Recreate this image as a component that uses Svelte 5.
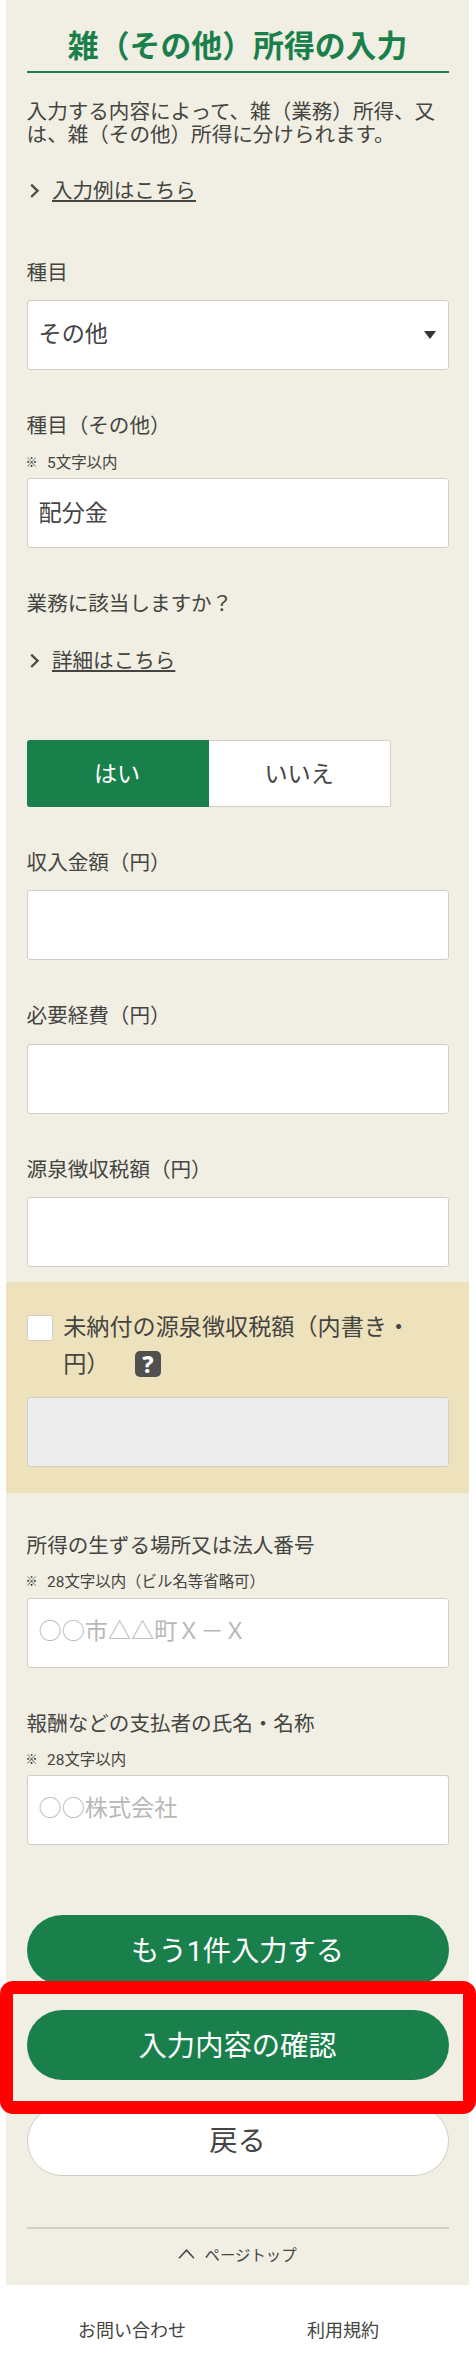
<script lang="ts">
  type AmountField = { id: string; label: string };

  const amounts: AmountField[] = [
    { id: 'income', label: '収入金額（円）' },
    { id: 'expense', label: '必要経費（円）' },
    { id: 'withholding', label: '源泉徴収税額（円）' }
  ];

  const payerFields = [
    { id: 'place', label: '所得の生ずる場所又は法人番号', hint: '28文字以内（ビル名等省略可）', placeholder: '○○市△△町Ｘ－Ｘ' },
    { id: 'payer', label: '報酬などの支払者の氏名・名称', hint: '28文字以内', placeholder: '○○株式会社' }
  ];

  let kind = $state('その他');
  let kindOther = $state('配分金');
  let isBusiness = $state(true);
  let unpaid = $state(false);
</script>

{#snippet chevron()}
  <svg class="chevron" width="10" height="16" viewBox="0 0 10 16">
    <path d="M1.2 1.6 L7.6 7.8 L1.2 14" fill="none" stroke="#4b4b48" stroke-width="2.3" />
  </svg>
{/snippet}

{#snippet hintLine(text: string)}
  <p class="hint"><span class="mark">※</span>{text}</p>
{/snippet}

<div class="page">
  <main>
    <h1>雑（その他）所得の入力</h1>
    <p class="intro">入力する内容によって、雑（業務）所得、又は、雑（その他）所得に分けられます。</p>
    <a class="link" href="#example">{@render chevron()}<span>入力例はこちら</span></a>

    <div class="field first">
      <label for="kind">種目</label>
      <div class="select">
        <select id="kind" bind:value={kind}>
          <option>その他</option>
        </select>
        <svg width="12" height="8" viewBox="0 0 12 8"><path d="M0 0H12L6 8Z" fill="#333" /></svg>
      </div>
    </div>

    <div class="field">
      <label for="kind-other">種目（その他）</label>
      {@render hintLine('5文字以内')}
      <input id="kind-other" type="text" bind:value={kindOther} />
    </div>

    <div class="question">
      <p>業務に該当しますか？</p>
      <a class="link" href="#detail">{@render chevron()}<span>詳細はこちら</span></a>
      <div class="toggle">
        <button class:on={isBusiness} onclick={() => (isBusiness = true)}>はい</button>
        <button class:on={!isBusiness} onclick={() => (isBusiness = false)}>いいえ</button>
      </div>
    </div>

    {#each amounts as f}
      <div class="field">
        <label for={f.id}>{f.label}</label>
        <input id={f.id} type="text" />
      </div>
    {/each}

    <section class="unpaid">
      <div class="check">
        <input id="unpaid" type="checkbox" bind:checked={unpaid} />
        <label for="unpaid">
          未納付の源泉徴収税額（内書き・円）<span class="help">?</span>
        </label>
      </div>
      <input type="text" aria-label="未納付の源泉徴収税額" disabled={!unpaid} />
    </section>

    {#each payerFields as f}
      <div class="field payer">
        <label for={f.id}>{f.label}</label>
        {@render hintLine(f.hint)}
        <input id={f.id} type="text" placeholder={f.placeholder} />
      </div>
    {/each}

    <div class="actions">
      <button>もう1件入力する</button>
      <div class="highlight"><button>入力内容の確認</button></div>
      <button class="back">戻る</button>
    </div>

    <a class="pagetop" href="#top">
      <svg width="17" height="10" viewBox="0 0 17 10">
        <path d="M1 9.3 L8.5 1.2 L16 9.3" fill="none" stroke="#444" stroke-width="1.5" />
      </svg>
      ページトップ
    </a>
  </main>

  <footer>
    <a href="#contact">お問い合わせ</a>
    <a href="#terms">利用規約</a>
  </footer>
</div>

<style>
  :global(body) {
    margin: 0;
    background: #fff;
  }

  .page {
    margin: 0 7px 0 6px;
    color: #444441;
    font-family: Roboto, 'Noto Sans CJK JP', sans-serif;
    font-size: 20.57px;
    text-spacing-trim: space-all;
  }

  main {
    box-sizing: border-box;
    height: 2284.7px;
    padding: 0 20.4px 0 20.6px;
    background: #f1efe3;
  }

  p,
  h1 {
    margin: 0;
  }

  a {
    color: inherit;
    text-decoration: none;
  }

  h1 {
    padding-top: 22px;
    height: 49.4px;
    border-bottom: 2.6px solid #1a804b;
    color: #1a804b;
    font-size: 30.86px;
    font-weight: 700;
    line-height: 50px;
    text-align: center;
  }

  .intro {
    margin-top: 27.4px;
    line-height: 23.4px;
  }

  .link {
    display: flex;
    align-items: center;
    height: 32px;
    line-height: 32px;
  }

  .intro + .link {
    margin-top: 27.1px;
  }

  .link span {
    text-decoration: underline;
    text-decoration-thickness: 1.5px;
    text-underline-offset: 2px;
  }

  .chevron {
    margin: 0 12.4px 0 3px;
  }

  .field {
    margin-top: 39px;
  }

  .field.first {
    margin-top: 49.3px;
  }

  .field label {
    display: block;
    height: 44.3px;
    line-height: 34px;
  }

  .hint {
    display: flex;
    margin-top: -3px;
    height: 27.4px;
    font-size: 15.43px;
    line-height: 25px;
  }

  .mark {
    width: 21.5px;
    margin-left: -1px;
    color: #222;
    font-size: 12px;
    font-weight: 500;
  }

  input[type='text'],
  select {
    display: block;
    box-sizing: border-box;
    width: 100%;
    height: 70px;
    margin: 0;
    padding: 0 11px 1px;
    border: 1.3px solid #d0cfc7;
    border-radius: 3px;
    background: #fff;
    color: #444;
    font: inherit;
    font-size: 23.14px;
    appearance: none;
  }

  input[type='text'] {
    padding-bottom: 3px;
  }

  input::placeholder {
    color: #b8b8b8;
  }

  input:disabled {
    background: #ededed;
  }

  .select {
    position: relative;
  }

  .select svg {
    position: absolute;
    top: 31px;
    right: 13px;
  }

  .question {
    margin-top: 39.6px;
  }

  .question p {
    line-height: 33px;
  }

  .question .link {
    margin-top: 24px;
  }

  .toggle {
    display: flex;
    width: 364px;
    height: 67px;
    margin-top: 63.5px;
  }

  .toggle button {
    flex: 1;
    padding: 0 0 4px;
    border: 1.3px solid #d0cfc7;
    border-left: 0;
    border-radius: 0 3px 3px 0;
    background: #fff;
    color: #444;
    font: inherit;
    font-size: 23.14px;
  }

  .toggle button:first-child {
    border-radius: 3px 0 0 3px;
  }

  .toggle .on {
    border-color: #1a804b;
    background: #1a804b;
    color: #fff;
  }

  .unpaid {
    box-sizing: border-box;
    height: 211px;
    margin: 14.7px -20.4px 0 -20.6px;
    padding: 27.5px 20.4px 0 20.6px;
    background: #eee2bc;
  }

  .check {
    display: flex;
    height: 87.5px;
    font-size: 23.14px;
    line-height: 37px;
  }

  .check input {
    box-sizing: border-box;
    flex: none;
    width: 26px;
    height: 26px;
    margin: 5.5px 10.6px 0 0;
    border: 1.3px solid #d0cfc7;
    border-radius: 3px;
    background: #fff;
    appearance: none;
  }

  .check input:checked {
    background: #1a804b;
  }

  .help {
    display: inline-block;
    width: 26px;
    height: 26px;
    margin-left: 25.5px;
    border-radius: 5px;
    background: #50504f;
    color: #fff;
    font-family: 'Noto Sans', sans-serif;
    font-size: 23px;
    font-weight: 800;
    line-height: 26px;
    text-align: center;
    vertical-align: -1px;
  }

  .unpaid + .payer {
    margin-top: 36.4px;
  }

  .actions {
    display: flex;
    flex-direction: column;
    gap: 25.3px;
    margin-top: 69.5px;
  }

  .actions button {
    display: block;
    width: 100%;
    height: 70px;
    padding: 0 0 3.5px;
    border: 0;
    border-radius: 35px;
    background: #1a804b;
    color: #fff;
    font: inherit;
    font-size: 28.3px;
  }

  .actions .back {
    border: 1.3px solid #d0cfc7;
    background: #fff;
    color: #444;
  }

  .highlight {
    position: relative;
  }

  .highlight::after {
    content: '';
    position: absolute;
    inset: -29.3px -27.4px -33.7px -26.6px;
    z-index: 1;
    border: 13px solid #f00;
    border-radius: 13px;
    pointer-events: none;
  }

  .pagetop {
    display: flex;
    align-items: center;
    justify-content: center;
    gap: 9px;
    margin-top: 51px;
    height: 51px;
    border-top: 2px solid #d0cfc4;
    font-size: 15.43px;
  }

  footer {
    display: grid;
    grid-template-columns: 1fr 1fr;
    padding: 0 20.5px;
    height: 94px;
    line-height: 92px;
    font-size: 18px;
    text-align: center;
  }
</style>
